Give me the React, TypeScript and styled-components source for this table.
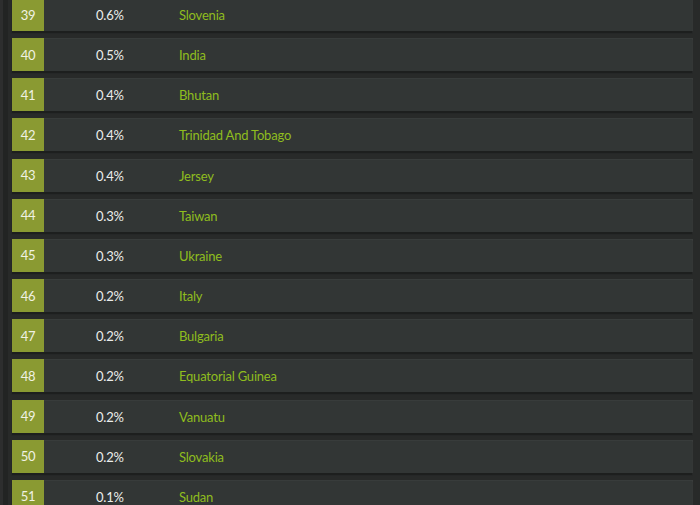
import styled, { createGlobalStyle } from 'styled-components';

type Entry = {
  rank: number
  share: string
  country: string
};

const entries: Entry[] = [
  { rank: 39, share: '0.6%', country: 'Slovenia' },
  { rank: 40, share: '0.5%', country: 'India' },
  { rank: 41, share: '0.4%', country: 'Bhutan' },
  { rank: 42, share: '0.4%', country: 'Trinidad And Tobago' },
  { rank: 43, share: '0.4%', country: 'Jersey' },
  { rank: 44, share: '0.3%', country: 'Taiwan' },
  { rank: 45, share: '0.3%', country: 'Ukraine' },
  { rank: 46, share: '0.2%', country: 'Italy' },
  { rank: 47, share: '0.2%', country: 'Bulgaria' },
  { rank: 48, share: '0.2%', country: 'Equatorial Guinea' },
  { rank: 49, share: '0.2%', country: 'Vanuatu' },
  { rank: 50, share: '0.2%', country: 'Slovakia' },
  { rank: 51, share: '0.1%', country: 'Sudan' },
];

const GlobalStyle = createGlobalStyle`
  html, body {
    margin: 0;
    padding: 0;
    background: #282a29;
    overflow: hidden;
  }
`;

const Page = styled.div`
  width: 700px;
  height: 505px;
  overflow: hidden;
  box-sizing: border-box;
  padding: 0 8px 0 12px;
  background: linear-gradient(to right, #2d2e2e 0 3px, #222423 3px 8px, #282a29 8px);
  font-family: Lato, "Open Sans", sans-serif;
  font-size: 13px;
  letter-spacing: -0.2px;
`;

const List = styled.ul`
  list-style: none;
  margin: -2px 0 0;
  padding: 0;
  display: flex;
  flex-direction: column;
  gap: 7.17px;
`;

const Row = styled.li`
  display: flex;
  align-items: center;
  height: 33px;
  background: #323635;
  border-top: 1px solid #383c3b;
  box-sizing: border-box;
  box-shadow: 0 2px 1px #1d1f1e, 1px 0 0 #3a3d3c;
`;

const Rank = styled.div`
  width: 32px;
  align-self: stretch;
  margin-top: -1px;
  display: flex;
  align-items: center;
  justify-content: center;
  background: #8a9a32;
  color: #f0f2e4;
`;

const Share = styled.div`
  width: 135px;
  padding-left: 52px;
  box-sizing: border-box;
  color: #eceeec;
`;

const Country = styled.div`
  color: #8fbd1e;
`;

const App = () => {
  return (
    <Page>
      <GlobalStyle />
      <List>
        {entries.map((entry) => (
          <Row key={entry.rank}>
            <Rank>{entry.rank}</Rank>
            <Share>{entry.share}</Share>
            <Country>{entry.country}</Country>
          </Row>
        ))}
      </List>
    </Page>
  );
};

export default App;
